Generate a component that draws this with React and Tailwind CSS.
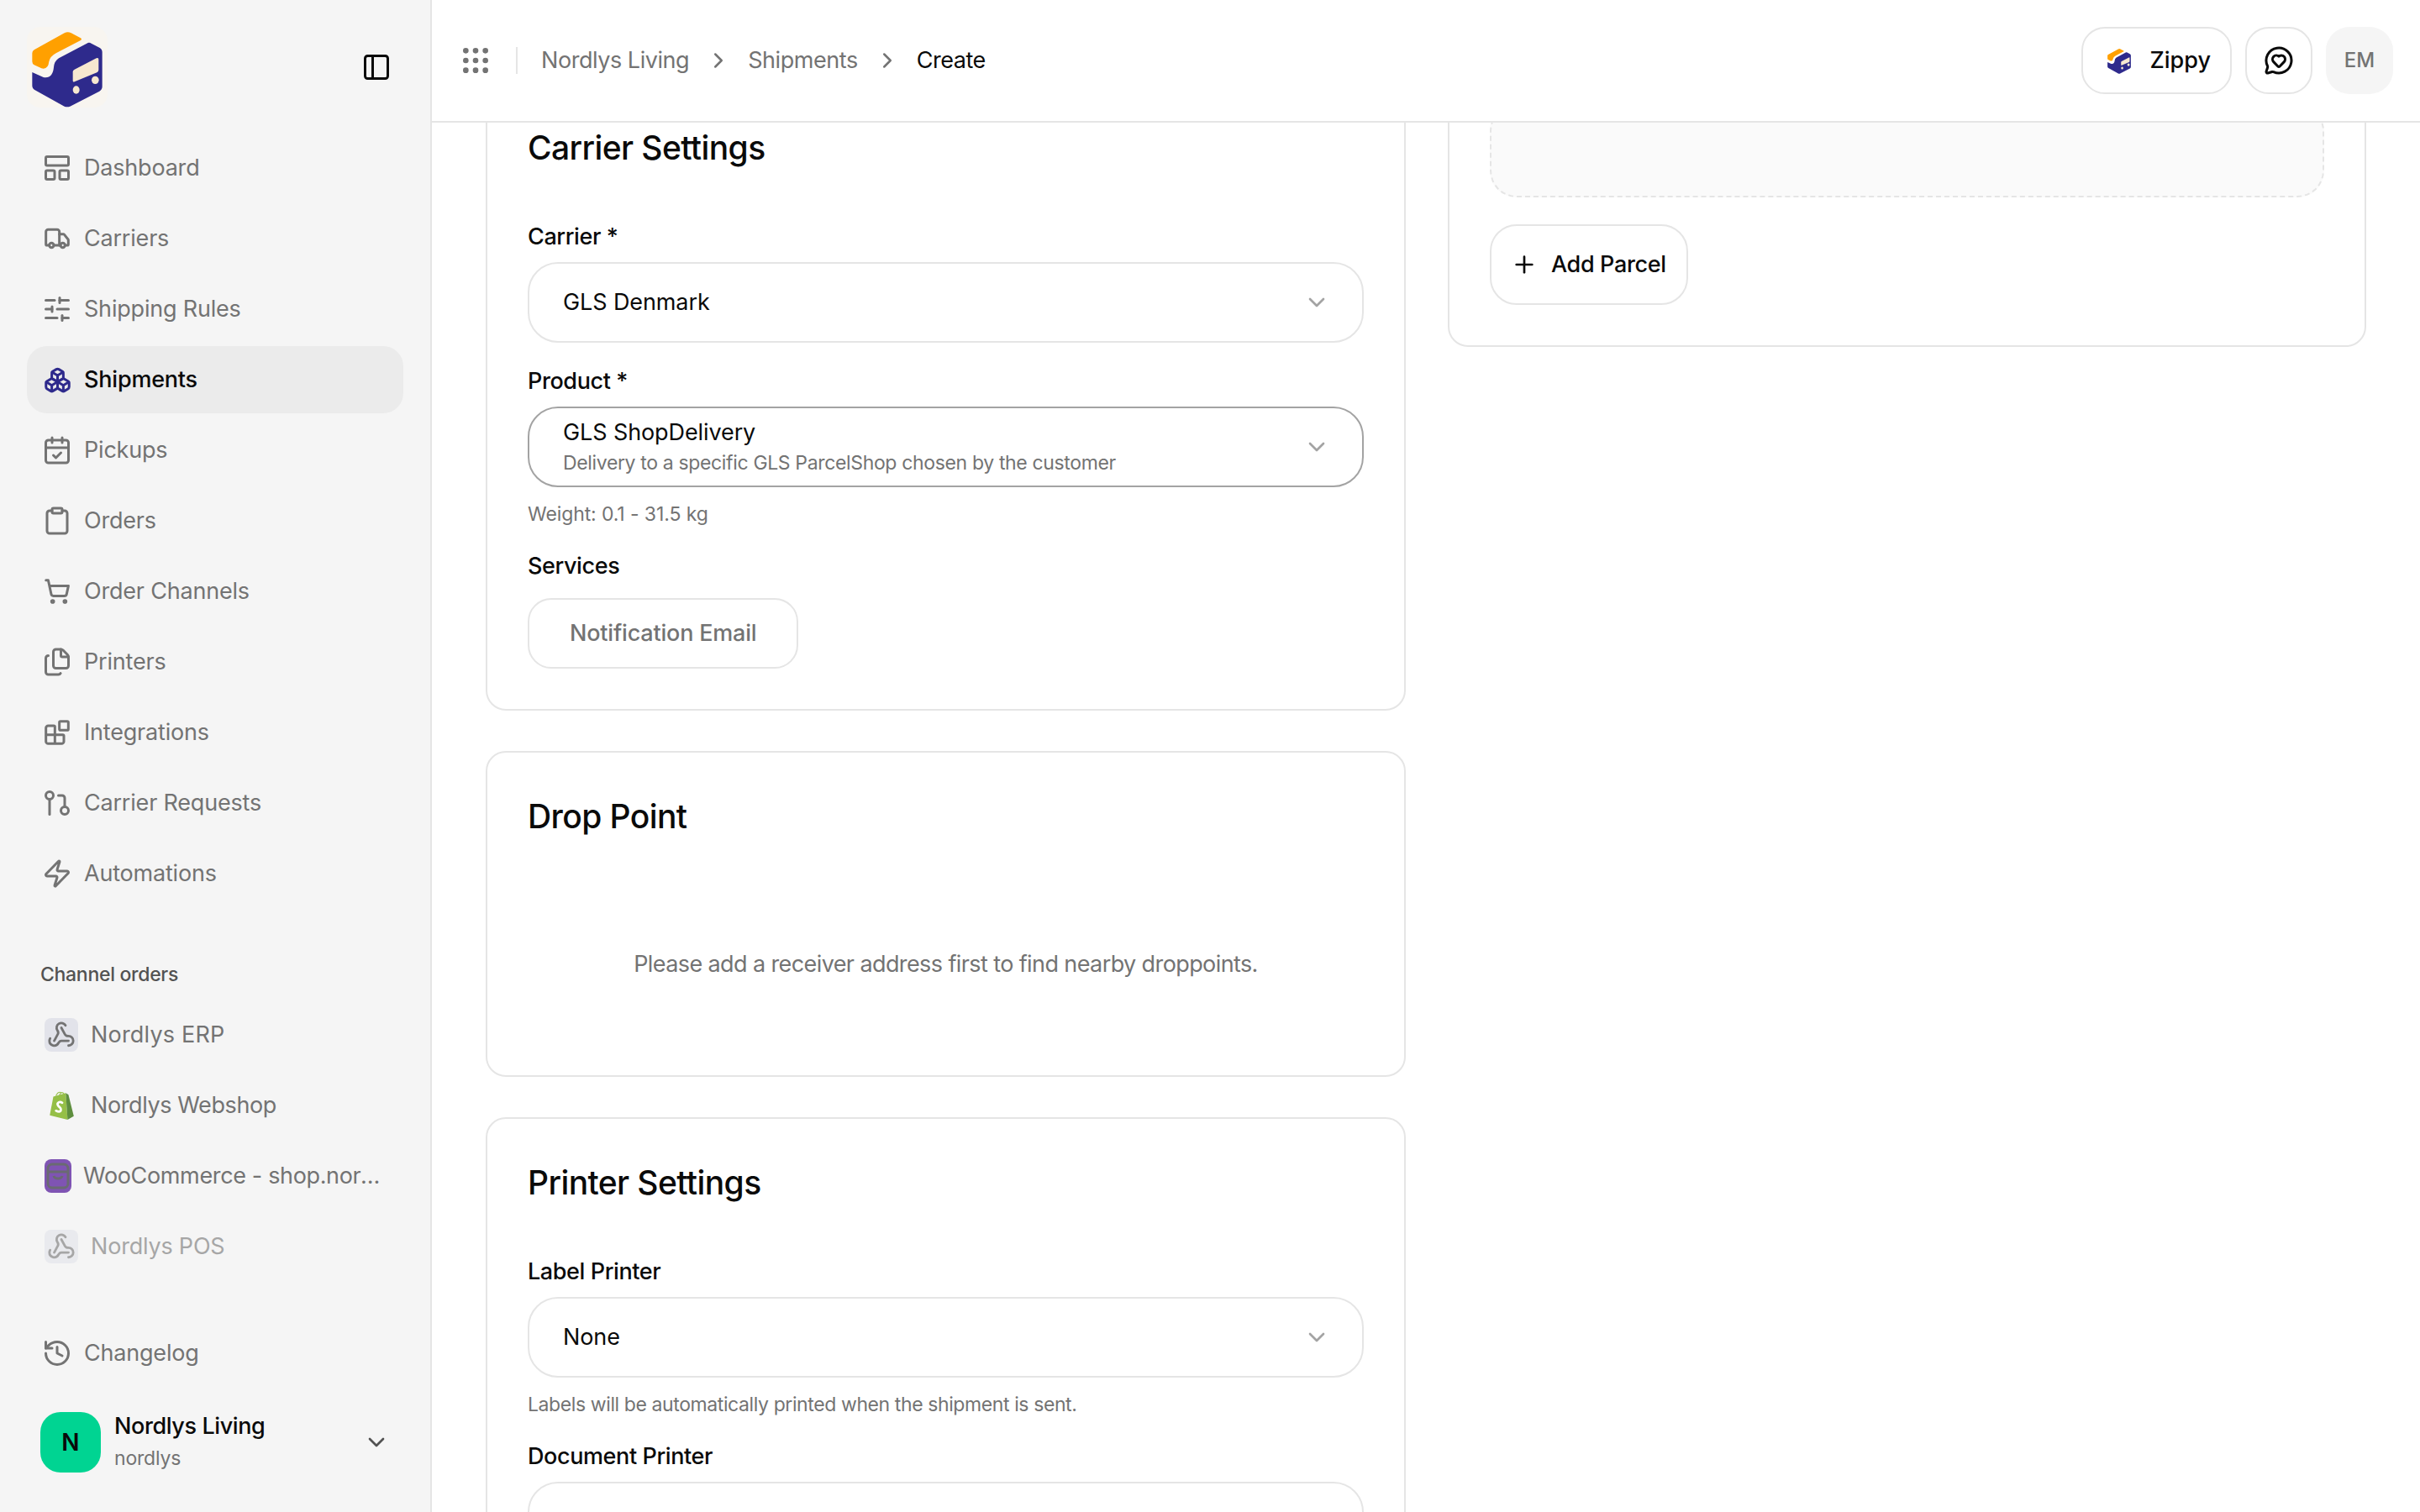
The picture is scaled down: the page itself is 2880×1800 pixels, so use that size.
import {
  Boxes,
  Blocks,
  CalendarCheck,
  ChevronDown,
  ChevronRight,
  Clipboard,
  Files,
  GitPullRequest,
  Grip,
  History,
  LayoutPanelTop,
  MessageCircleHeart,
  PanelLeft,
  Plus,
  ShoppingCart,
  SlidersHorizontal,
  Truck,
  Webhook,
  Zap,
} from "lucide-react";

const navItems = [
  { label: "Dashboard", icon: LayoutPanelTop },
  { label: "Carriers", icon: Truck, size: 32 },
  { label: "Shipping Rules", icon: SlidersHorizontal },
  { label: "Shipments", icon: Boxes, size: 33, active: true },
  { label: "Pickups", icon: CalendarCheck },
  { label: "Orders", icon: Clipboard },
  { label: "Order Channels", icon: ShoppingCart, size: 32 },
  { label: "Printers", icon: Files },
  { label: "Integrations", icon: Blocks, size: 32 },
  { label: "Carrier Requests", icon: GitPullRequest },
  { label: "Automations", icon: Zap },
];

const Logo = ({ className }) => (
  <svg viewBox="36 36 288 288" className={className}>
    <path
      d="M62 118L170 58Q182 52 194 58L228 76Q234 80 228 84L140 130Q118 142 115 160Q112 190 88 184L62 172Q55 168 55 160V130Q55 122 62 118Z"
      fill="#ffa000"
    />
    <path
      d="M55 198L95 216Q128 222 132 180Q134 158 150 148L250 95Q258 90 266 95L295 110Q305 116 305 126V250Q305 260 295 266L190 320Q180 324 170 320L65 262Q55 256 55 246Z"
      fill="#2e2a8c"
    />
    <path
      d="M206 188L284 148Q292 144 292 152V190Q292 196 286 199L206 232Q200 234 200 228V196Q200 191 206 188Z"
      fill="#f7e8d0"
    />
    <ellipse cx="212" cy="261" rx="12" ry="14" fill="#f7e8d0" />
    <ellipse cx="280" cy="226" rx="13" ry="14" fill="#f7e8d0" />
  </svg>
);

const ShopifyIcon = () => (
  <svg viewBox="0 0 30 34" className="h-[36px] w-[32px]">
    <path d="M2 28L6 7L20 3L22 33Z" fill="#95bf47" />
    <path d="M20 3L23 5L29 29L22 33Z" fill="#5e8e3e" />
    <path
      d="M9 8C9 3 13 1 15 3M13 6C13 3 16 1 18 4"
      fill="none"
      stroke="#95bf47"
      strokeWidth="1"
    />
    <path
      d="M16 14C13 12 10 14 11 16.500C12 19 15 19 14.500 22C14 25 11 24 9 23"
      fill="none"
      stroke="#fff"
      strokeWidth="2.600"
      strokeLinecap="round"
    />
  </svg>
);

const WooIcon = () => (
  <div className="flex h-[40px] w-[32px] items-center justify-center rounded-[8px] bg-[#7f54b3]">
    <svg viewBox="0 0 32 40" className="h-[40px] w-[32px]" fill="none" stroke="#6a6a72" strokeWidth="3">
      <rect x="4" y="6" width="24" height="28" rx="5" />
      <path d="M4 15H28M11 20C12 24 20 24 21 20" />
    </svg>
  </div>
);

const WebhookTile = () => (
  <div className="flex size-[40px] items-center justify-center rounded-[8px] bg-[#e2e3ea]">
    <Webhook size={34} color="#737373" className="shrink-0" />
  </div>
);

const NavItem = ({ label, icon: Icon, size = 36, active }) => (
  <a
    className={`flex h-[80px] items-center gap-[14px] rounded-[24px] pl-[18px] text-[27px] tracking-[-0.2px] ${
      active ? "bg-[#ebebeb] font-medium text-[#0a0a0a]" : "text-[#737373]"
    }`}
  >
    <span className="flex size-[36px] shrink-0 items-center justify-center">
      <Icon size={size} strokeWidth={72 / size} color={active ? "#2e2a8c" : "#737373"} />
    </span>
    {label}
  </a>
);

const ChannelItem = ({ label, icon, className, muted }) => (
  <a
    className={`flex h-[80px] items-center pl-[21px] text-[27px] text-[#737373] ${className} ${
      muted ? "opacity-60" : ""
    }`}
  >
    <span className="shrink-0">{icon}</span>
    <span className="truncate">{label}</span>
  </a>
);

const Sidebar = () => (
  <aside className="flex h-full w-[514px] shrink-0 flex-col border-r-2 border-[#e5e5e5] bg-[#f5f5f5]">
    <div className="flex h-[160px] shrink-0 items-center justify-between pr-[46px] pl-[32px]">
      <Logo className="size-[96px] rounded-[16px] bg-[#f8f5f0]" />
      <PanelLeft size={36} color="#0a0a0a" />
    </div>
    <nav className="mx-[32px] flex flex-col gap-[4px]">
      {navItems.map((item) => (
        <NavItem key={item.label} {...item} />
      ))}
    </nav>
    <div className="mt-[64px] pl-[48px] text-[23px] leading-[32px] font-medium tracking-[-0.3px] text-[#525252]">
      Channel orders
    </div>
    <div className="mx-[32px] mt-[16px] flex flex-col gap-[4px]">
      <ChannelItem label="Nordlys ERP" icon={<WebhookTile />} className="gap-[15px] tracking-[0.2px]" />
      <ChannelItem
        label="Nordlys Webshop"
        icon={
          <div className="flex size-[40px] items-center justify-center">
            <ShopifyIcon />
          </div>
        }
        className="gap-[15px] tracking-[-0.4px]"
      />
      <ChannelItem
        label="WooCommerce - shop.nordlys.dk"
        icon={<WooIcon />}
        className="gap-[14px] pr-[26px] tracking-[-0.35px]"
      />
      <ChannelItem label="Nordlys POS" icon={<WebhookTile />} className="gap-[15px] tracking-[-0.2px]" muted />
    </div>
    <div className="mx-[32px] mt-auto pb-[45px]">
      <NavItem label="Changelog" icon={History} />
      <div className="mt-[28px] flex items-center pr-[16px] pl-[16px]">
        <div className="flex size-[72px] items-center justify-center rounded-[24px] bg-[#00d492] text-[28px] font-semibold text-[#0a0a0a]">
          N
        </div>
        <div className="ml-[16px] flex-1">
          <div className="text-[27px] leading-[38px] font-medium tracking-[-0.4px] text-[#0a0a0a]">Nordlys Living</div>
          <div className="text-[23px] leading-[38px] tracking-[-0.2px] text-[#737373]">nordlys</div>
        </div>
        <ChevronDown size={32} color="#525252" />
      </div>
    </div>
  </aside>
);

const Header = () => (
  <header className="flex h-[146px] shrink-0 items-center border-b-2 border-[#e5e5e5] bg-white pr-[32px] pl-[32px]">
    <Grip size={40} color="#737373" />
    <div className="mx-[28px] h-[32px] w-[2px] bg-[#e5e5e5]" />
    <div className="flex items-center gap-[20px] text-[27px] tracking-[-0.45px] text-[#737373]">
      <span>Nordlys Living</span>
      <ChevronRight size={30} color="#737373" />
      <span>Shipments</span>
      <ChevronRight size={30} color="#737373" />
      <span className="text-[#0a0a0a]">Create</span>
    </div>
    <div className="ml-auto flex items-center gap-[16px]">
      <button className="flex h-[80px] items-center gap-[21px] rounded-[28px] border-2 border-[#e5e5e5] pr-[23px] pl-[27px] text-[27px] font-medium text-[#0a0a0a]">
        <Logo className="size-[32px]" />
        Zippy
      </button>
      <button className="flex size-[80px] items-center justify-center rounded-[28px] border-2 border-[#e5e5e5]">
        <MessageCircleHeart size={36} color="#0a0a0a" />
      </button>
      <div className="flex size-[80px] items-center justify-center rounded-[28px] bg-[#f5f5f5] text-[24px] font-medium text-[#737373]">
        EM
      </div>
    </div>
  </header>
);

const Field = ({ label, className = "" }) => (
  <div className={`text-[27px] leading-[40px] font-medium tracking-[-0.4px] text-[#0a0a0a] ${className}`}>{label}</div>
);

const Select = ({ value, sub, focused }) => (
  <div
    className={`mt-[10px] flex h-[96px] items-center justify-between rounded-[36px] border-2 pr-[38px] pl-[40px] ${
      focused ? "border-[#a3a3a3]" : "border-[#e5e5e5]"
    }`}
  >
    <div className={sub ? "mt-[2px]" : ""}>
      <div className="text-[27px] leading-[36px] tracking-[-0.1px] text-[#0a0a0a]">{value}</div>
      {sub && <div className="text-[23px] leading-[36px] tracking-[-0.35px] text-[#737373]">{sub}</div>}
    </div>
    <ChevronDown size={32} color="#a3a3a3" />
  </div>
);

const Hint = ({ children, className = "tracking-[-0.4px]" }) => (
  <div className={`mt-[16px] text-[23px] leading-[32px] text-[#737373] ${className}`}>{children}</div>
);

const Title = ({ children }) => (
  <h2 className="text-[39px] leading-[56px] font-medium tracking-[-0.6px] text-[#0a0a0a]">{children}</h2>
);

const cardClass = "rounded-[24px] border-2 border-[#e5e5e5] bg-white";

const App = () => {
  return (
    <div className="flex h-screen w-full overflow-hidden bg-white font-['Inter',sans-serif]">
      <Sidebar />
      <main className="flex min-w-0 flex-1 flex-col">
        <Header />
        <div className="flex-1 overflow-hidden px-[64px]">
          <div className="-mt-[48px] grid grid-cols-[1095px_1fr] items-start gap-x-[50px]">
            <div className="flex flex-col gap-[48px]">
              <section className={`${cardClass} p-[48px]`}>
                <Title>Carrier Settings</Title>
                <Field label="Carrier *" className="mt-[58px]" />
                <Select value="GLS Denmark" />
                <Field label="Product *" className="mt-[26px]" />
                <Select
                  value="GLS ShopDelivery"
                  sub="Delivery to a specific GLS ParcelShop chosen by the customer"
                  focused
                />
                <Hint className="tracking-[-0.1px]">Weight: 0.1 - 31.5 kg</Hint>
                <Field label="Services" className="mt-[26px]" />
                <button className="mt-[18px] flex h-[84px] items-center rounded-[28px] border-2 border-[#e5e5e5] px-[48px] text-[27px] font-medium tracking-[-0.2px] text-[#737373]">
                  Notification Email
                </button>
              </section>

              <section className={`${cardClass} px-[48px] pt-[48px] pb-[50px]`}>
                <Title>Drop Point</Title>
                <p className="mt-[128px] mb-[62px] text-center text-[27px] leading-[40px] tracking-[-0.6px] text-[#737373]">
                  Please add a receiver address first to find nearby droppoints.
                </p>
              </section>

              <section className={`${cardClass} p-[48px]`}>
                <Title>Printer Settings</Title>
                <Field label="Label Printer" className="mt-[58px]" />
                <Select value="None" />
                <Hint>Labels will be automatically printed when the shipment is sent.</Hint>
                <Field label="Document Printer" className="mt-[26px]" />
                <Select value="None" />
              </section>
            </div>

            <section className={`${cardClass} px-[48px] pt-[24px] pb-[48px]`}>
              <div className="h-[111px] rounded-[32px] border-2 border-dashed border-[#e5e5e5] bg-[#fafafa]" />
              <button className="mt-[32px] flex h-[96px] items-center gap-[16px] rounded-[32px] border-2 border-[#e5e5e5] pr-[24px] pl-[23px] text-[27px] font-medium tracking-[-0.35px] text-[#0a0a0a]">
                <Plus size={32} color="#0a0a0a" />
                Add Parcel
              </button>
            </section>
          </div>
        </div>
      </main>
    </div>
  );
};

export default App;
